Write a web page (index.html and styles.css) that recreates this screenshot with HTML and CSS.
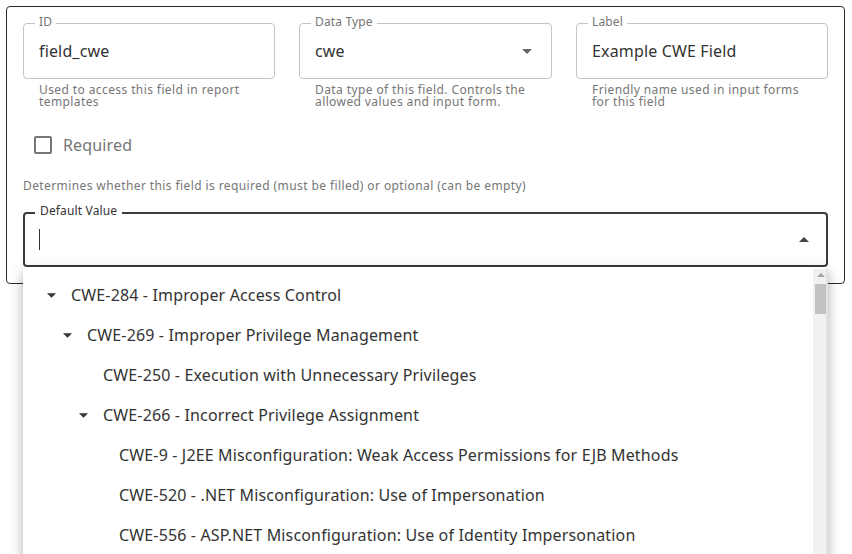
FILE: index.html
```html
<!DOCTYPE html>
<html lang="en">
<head>
<meta charset="utf-8">
<title>Field editor</title>
<link rel="stylesheet" href="styles.css">
</head>
<body>
<div class="card">
  <div class="fields">
    <div class="field-group">
      <div class="field">
        <span class="field-label">ID</span>
        <span class="field-value">field_cwe</span>
      </div>
      <p class="helper">Used to access this field in report templates</p>
    </div>
    <div class="field-group">
      <div class="field">
        <span class="field-label">Data Type</span>
        <span class="field-value">cwe</span>
        <svg class="select-arrow" width="10" height="5" viewBox="0 0 10 5"><path d="M0 0 L5 5 L10 0 Z" fill="#666"/></svg>
      </div>
      <p class="helper">Data type of this field. Controls the allowed values and input form.</p>
    </div>
    <div class="field-group">
      <div class="field">
        <span class="field-label">Label</span>
        <span class="field-value">Example CWE Field</span>
      </div>
      <p class="helper">Friendly name used in input forms for this field</p>
    </div>
  </div>

  <label class="check-row">
    <span class="checkbox"></span>
    <span class="check-text">Required</span>
  </label>

  <p class="note">Determines whether this field is required (must be filled) or optional (can be empty)</p>

  <div class="combo-wrap">
    <div class="combo">
      <span class="combo-label">Default Value</span>
      <span class="caret"></span>
      <svg class="combo-arrow" width="10" height="5" viewBox="0 0 10 5"><path d="M0 5 L5 0 L10 5 Z" fill="#444"/></svg>
    </div>
    <div class="dropdown">
      <ul class="tree">
        <li class="node lvl0"><span class="twisty"><svg width="9" height="5" viewBox="0 0 10 5"><path d="M0 0 L5 5 L10 0 Z" fill="#333"/></svg></span><span>CWE-284 - Improper Access Control</span></li>
        <li class="node lvl1"><span class="twisty"><svg width="9" height="5" viewBox="0 0 10 5"><path d="M0 0 L5 5 L10 0 Z" fill="#333"/></svg></span><span>CWE-269 - Improper Privilege Management</span></li>
        <li class="node lvl2"><span class="twisty"></span><span>CWE-250 - Execution with Unnecessary Privileges</span></li>
        <li class="node lvl2"><span class="twisty"><svg width="9" height="5" viewBox="0 0 10 5"><path d="M0 0 L5 5 L10 0 Z" fill="#333"/></svg></span><span>CWE-266 - Incorrect Privilege Assignment</span></li>
        <li class="node lvl3"><span class="twisty"></span><span>CWE-9 - J2EE Misconfiguration: Weak Access Permissions for EJB Methods</span></li>
        <li class="node lvl3"><span class="twisty"></span><span>CWE-520 - .NET Misconfiguration: Use of Impersonation</span></li>
        <li class="node lvl3"><span class="twisty"></span><span>CWE-556 - ASP.NET Misconfiguration: Use of Identity Impersonation</span></li>
      </ul>
      <div class="scrollbar">
        <svg class="sb-up" width="8" height="4" viewBox="0 0 8 4"><path d="M0 4 L4 0 L8 4 Z" fill="#a3a3a3"/></svg>
        <div class="sb-thumb"></div>
      </div>
    </div>
  </div>
</div>
</body>
</html>
```

FILE: styles.css
```css
* { box-sizing: border-box; }

html, body {
  margin: 0;
  padding: 0;
  background: #ffffff;
  overflow: hidden;
}

body {
  font-family: "Noto Sans", "Open Sans", sans-serif;
  color: #333333;
  width: 852px;
  height: 554px;
}

.card {
  margin: 6px 0 0 6px;
  width: 839px;
  height: 278px;
  border: 1px solid #2b2b2b;
  border-radius: 4px;
  padding: 16px;
}

.fields {
  display: grid;
  grid-template-columns: 252px 253px 252px;
  column-gap: 24px;
}

.field {
  position: relative;
  height: 56px;
  border: 1px solid #c4c4c4;
  border-radius: 4px;
  padding: 0 15px;
  display: flex;
  align-items: center;
  justify-content: space-between;
}

.field-label {
  position: absolute;
  top: -8px;
  left: 11px;
  padding: 0 4px;
  background: #ffffff;
  font-size: 12px;
  line-height: 12px;
  letter-spacing: 0.15px;
  color: #767676;
}

.field-value {
  font-size: 16px;
  letter-spacing: 0.15px;
  color: #333333;
}

.select-arrow {
  margin-right: 4px;
}

.helper {
  margin: 5px 0 0;
  padding: 0 16px;
  font-size: 12px;
  line-height: 12px;
  letter-spacing: 0.4px;
  color: #767676;
}

.check-row {
  display: flex;
  align-items: center;
  height: 24px;
  margin-top: 25px;
  padding-left: 11px;
}

.checkbox {
  width: 18px;
  height: 18px;
  border: 2px solid #767676;
  border-radius: 2px;
  margin-right: 11px;
}

.check-text {
  font-size: 16px;
  line-height: 24px;
  letter-spacing: 0.15px;
  color: #767676;
}

.note {
  margin: 21px 0 0;
  font-size: 12px;
  line-height: 16px;
  letter-spacing: 0.4px;
  color: #767676;
}

.combo-wrap {
  position: relative;
  margin-top: 18px;
}

.combo {
  position: relative;
  height: 55px;
  border: 2px solid #3c3c3c;
  border-radius: 4px;
  padding: 0 17px 0 14px;
  display: flex;
  align-items: center;
  justify-content: space-between;
}

.combo-label {
  position: absolute;
  top: -9px;
  left: 10px;
  padding: 0 5px;
  background: #ffffff;
  font-size: 12px;
  line-height: 12px;
  letter-spacing: 0.15px;
  color: #333333;
}

.caret {
  width: 1px;
  height: 21px;
  background: #333333;
}

.dropdown {
  position: absolute;
  top: 100%;
  left: 0;
  width: 805px;
  height: 287px;
  background: #ffffff;
  border-radius: 4px 4px 0 0;
  box-shadow: 0 5px 5px -3px rgba(0,0,0,0.2), 0 8px 10px 1px rgba(0,0,0,0.14), 0 3px 14px 2px rgba(0,0,0,0.12);
  display: flex;
  overflow: hidden;
}

.tree {
  flex: 1;
  list-style: none;
  margin: 0;
  padding: 8px 0 0;
}

.node {
  height: 40px;
  display: flex;
  align-items: center;
  font-size: 16px;
  letter-spacing: 0.15px;
  color: #333333;
  white-space: nowrap;
}

.lvl0 { padding-left: 16px; }
.lvl1 { padding-left: 32px; }
.lvl2 { padding-left: 48px; }
.lvl3 { padding-left: 64px; }

.twisty {
  width: 24px;
  height: 24px;
  margin-right: 8px;
  display: flex;
  align-items: center;
  justify-content: center;
}

.scrollbar {
  width: 15px;
  margin-top: 2px;
  background: #f1f1f1;
  border-right: 2px solid #e2e2e2;
  display: flex;
  flex-direction: column;
  align-items: center;
  padding-top: 4px;
}

.sb-up {
  display: block;
  margin-left: 2px;
}

.sb-thumb {
  width: 11px;
  height: 30px;
  margin-top: 7px;
  margin-left: 2px;
  background: #c1c1c1;
}
```
